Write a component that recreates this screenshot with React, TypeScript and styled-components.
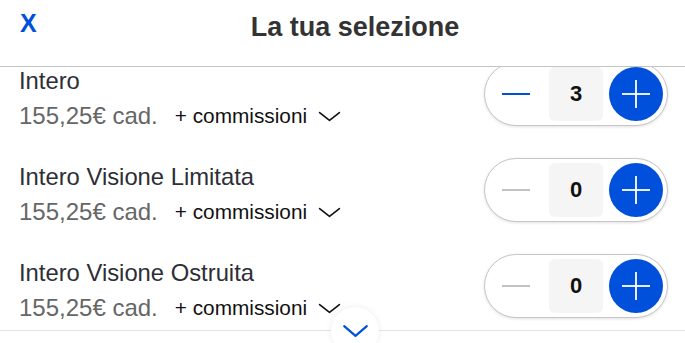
import React, { useState } from "react";
import styled, { createGlobalStyle } from "styled-components";

const Global = createGlobalStyle`
  html, body { margin: 0; padding: 0; background: #fff; overflow: hidden; }
  body { font-family: "Liberation Sans", Arial, sans-serif; }
  * { box-sizing: border-box; }
`;

const BLUE = "#0050dc";

const Sheet = styled.div`
  width: 710px;
  height: 343px;
  display: flex;
  flex-direction: column;
  background: #fff;
`;

const Header = styled.header`
  height: 67px;
  flex: none;
  display: grid;
  grid-template-columns: 1fr auto 1fr;
  align-items: start;
  padding: 11px 20px 0 20px;
  border-bottom: 1px solid #c4c4c4;
`;

const CloseButton = styled.button`
  justify-self: start;
  border: 0;
  background: none;
  padding: 0;
  margin: 0;
  font-family: "Liberation Sans", Arial, sans-serif;
  font-weight: 700;
  font-size: 25px;
  line-height: 25px;
  color: ${BLUE};
  cursor: pointer;
`;

const Title = styled.h1`
  margin: 3px 0 0 0;
  font-size: 27px;
  line-height: 27px;
  font-weight: 700;
  color: #333;
`;

const List = styled.div`
  flex: 1;
  overflow: hidden;
`;

const Track = styled.div`
  margin-top: -21px;
`;

const Row = styled.div`
  height: 96px;
  display: flex;
  justify-content: space-between;
  align-items: center;
  padding: 0 42px 0 19px;
`;

const Info = styled.div`
  align-self: flex-start;
  padding-top: 21px;
  display: flex;
  flex-direction: column;
  gap: 7px;
`;

const ItemName = styled.div`
  font-size: 23.8px;
  line-height: 28px;
  color: #2d2e36;
`;

const PriceLine = styled.div`
  display: flex;
  align-items: center;
  height: 28px;
`;

const Price = styled.span`
  font-size: 24px;
  line-height: 28px;
  color: #666;
`;

const Fees = styled.button`
  display: flex;
  align-items: center;
  gap: 11px;
  margin-left: 17px;
  border: 0;
  background: none;
  padding: 0;
  font-family: "Liberation Sans", Arial, sans-serif;
  font-size: 20.8px;
  line-height: 28px;
  color: #111;
  cursor: pointer;
`;

const Stepper = styled.div`
  display: flex;
  align-items: center;
  gap: 6px;
  padding: 4px;
  border: 1px solid #c6c6c6;
  border-radius: 40px;
  background: #fff;
  box-shadow: 0 1px 3px rgba(0, 0, 0, 0.12);
`;

const MinusButton = styled.button<{ $active: boolean }>`
  width: 54px;
  height: 54px;
  border: 0;
  border-radius: 50%;
  background: none;
  display: flex;
  align-items: center;
  justify-content: center;
  padding: 0;
  cursor: pointer;
  color: ${(p) => (p.$active ? BLUE : "#c2c2c2")};
`;

const Value = styled.div`
  width: 54px;
  height: 54px;
  border-radius: 6px;
  background: #f5f5f5;
  display: flex;
  align-items: center;
  justify-content: center;
  font-size: 22px;
  font-weight: 700;
  color: #111;
`;

const PlusButton = styled.button`
  width: 54px;
  height: 54px;
  border: 0;
  border-radius: 50%;
  background: ${BLUE};
  color: #fff;
  display: flex;
  align-items: center;
  justify-content: center;
  padding: 0;
  cursor: pointer;
`;

const Footer = styled.div`
  position: relative;
  height: 13px;
  flex: none;
  border-top: 1px solid #e4e4e4;
`;

const ScrollButton = styled.button`
  position: absolute;
  left: 50%;
  top: -24px;
  transform: translateX(-50%);
  width: 48px;
  height: 48px;
  border-radius: 50%;
  border: 0;
  background: #fff;
  box-shadow: 0 0 6px rgba(0, 0, 0, 0.08);
  display: flex;
  align-items: center;
  justify-content: center;
  padding: 0;
  color: ${BLUE};
`;

const Chevron = ({ w, h, sw }: { w: number; h: number; sw: number }) => (
  <svg width={w} height={h} viewBox={`0 0 ${w} ${h}`} fill="none">
    <path
      d={`M${sw} ${sw} L${w / 2} ${h - sw} L${w - sw} ${sw}`}
      stroke="currentColor"
      strokeWidth={sw}
      strokeLinecap="round"
      strokeLinejoin="round"
    />
  </svg>
);

const items = [
  { name: "Intero", qty: 3 },
  { name: "Intero Visione Limitata", qty: 0 },
  { name: "Intero Visione Ostruita", qty: 0 },
];

export default function App() {
  const [qty, setQty] = useState(items.map((i) => i.qty));
  const change = (i: number, d: number) =>
    setQty((q) => q.map((v, k) => (k === i ? Math.max(0, v + d) : v)));

  return (
    <>
      <Global />
      <Sheet>
        <Header>
          <CloseButton>X</CloseButton>
          <Title>La tua selezione</Title>
        </Header>
        <List>
          <Track>
            {items.map((it, i) => (
              <Row key={it.name}>
                <Info>
                  <ItemName>{it.name}</ItemName>
                  <PriceLine>
                    <Price>155,25€ cad.</Price>
                    <Fees>
                      + commissioni
                      <Chevron w={23} h={11} sw={1.6} />
                    </Fees>
                  </PriceLine>
                </Info>
                <Stepper>
                  <MinusButton $active={qty[i] > 0} onClick={() => change(i, -1)}>
                    <svg width="28" height="4" viewBox="0 0 28 4">
                      <line x1="0" y1="2" x2="28" y2="2" stroke="currentColor" strokeWidth="2" />
                    </svg>
                  </MinusButton>
                  <Value>{qty[i]}</Value>
                  <PlusButton onClick={() => change(i, 1)}>
                    <svg width="28" height="28" viewBox="0 0 28 28">
                      <line x1="0" y1="14" x2="28" y2="14" stroke="currentColor" strokeWidth="1.8" />
                      <line x1="14" y1="0" x2="14" y2="28" stroke="currentColor" strokeWidth="1.8" />
                    </svg>
                  </PlusButton>
                </Stepper>
              </Row>
            ))}
          </Track>
        </List>
        <Footer>
          <ScrollButton>
            <Chevron w={27} h={14} sw={2.2} />
          </ScrollButton>
        </Footer>
      </Sheet>
    </>
  );
}
